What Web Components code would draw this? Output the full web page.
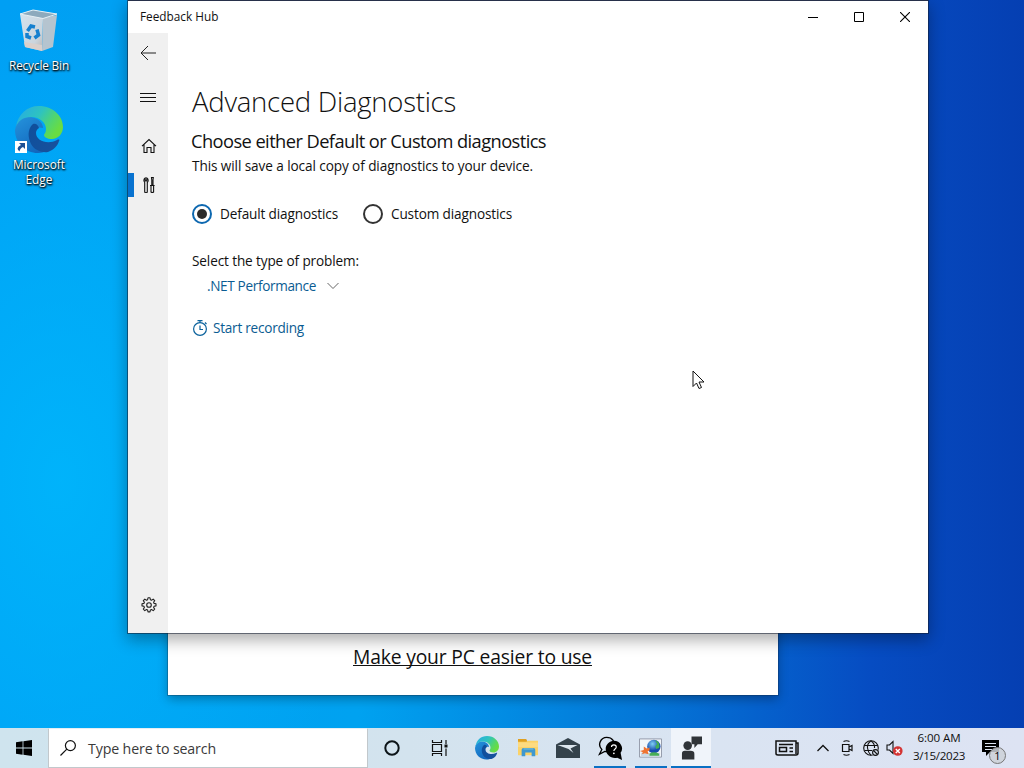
<!DOCTYPE html>
<html lang="en">
<head>
<meta charset="utf-8">
<title>Feedback Hub</title>
<style>
    html, body {
        margin: 0;
        width: 1024px;
        height: 768px;
        overflow: hidden;
        font-family: "Open Sans", "Noto Sans", sans-serif;
    }
</style>
</head>
<body>
<win-desktop></win-desktop>
<script>
(function () {
    function define(name, html, setup) {
        const template = document.createElement("template");
        template.innerHTML = html;
        customElements.define(name, class extends HTMLElement {
            constructor() {
                super();
                this.attachShadow({ mode: "open" }).appendChild(template.content.cloneNode(true));
            }
            connectedCallback() {
                if (setup) setup.call(this, this.shadowRoot);
            }
        });
    }

    // One line of text, tracked so that it spans the given width
    define("text-run", `
        <style>
            :host { display: block; white-space: nowrap; }
            span { display: inline-block; }
        </style>
        <span><slot></slot></span>
    `, function (root) {
        const span = root.querySelector("span");
        const width = Number(this.getAttribute("width"));
        if (!width) return;
        span.style.letterSpacing = "0";
        const natural = span.getBoundingClientRect().width;
        span.style.letterSpacing = (width - natural) / this.textContent.length + "px";
    });

    // ---- icons ----
    const edgeArt = id => `
        <svg viewBox="0 0 48 48">
            <defs>
                <linearGradient id="${id}a" x1="0" y1="0" x2="1" y2=".5">
                    <stop offset="0" stop-color="#25a9e8"/><stop offset=".5" stop-color="#2ec3c0"/>
                    <stop offset=".8" stop-color="#52d66c"/><stop offset="1" stop-color="#69dc42"/>
                </linearGradient>
                <linearGradient id="${id}b" x1="0" y1="0" x2=".6" y2="1">
                    <stop offset="0" stop-color="#2593dc"/><stop offset="1" stop-color="#1267bd"/>
                </linearGradient>
                <linearGradient id="${id}c" x1="0" y1="0" x2="1" y2=".3">
                    <stop offset="0" stop-color="#0f4f9c"/><stop offset="1" stop-color="#17519c"/>
                </linearGradient>
            </defs>
            <path fill="url(#${id}b)" d="M1 20C2 15 8 11 14 11c8 0 14 5 14 11-6-2-10 1-10 7 0 8 6 14 15 15-3 2-6 3-10 3C10 47 0 37 0 24z"/>
            <path fill="url(#${id}c)" d="M18 18c-6 5-5 14-2 20 3 6 11 9 17 8 6-2 10-7 11-11 1-1 0-2-2-1-9 5-21 1-21-7 0-2 1-4 3-5-1-3-3-5-6-4z"/>
            <path fill="url(#${id}a)" d="M1 21C3 8 12 0 24 0c14 0 24 10 24 21 0 7-5 12-11 12-5 0-8-2-8-4 0-1 2-2 2-6 0-6-6-12-15-12C8 11 3 15 1 21z"/>
        </svg>`;

    const icons = {
        back: `<svg viewBox="0 0 16 16" fill="none" stroke="#222"><path d="M8 1 1 8l7 7M1 8h15"/></svg>`,
        menu: `<svg viewBox="0 0 16 16" stroke="#111"><path d="M0 3.5h16M0 7.5h16M0 11.5h16"/></svg>`,
        home: `<svg viewBox="0 0 16 16" fill="none" stroke="#111" stroke-width="1.1"><path d="M1 8.2 8 1.500l7 6.700M3 6.500v8h3v-5h4v5h3v-8"/></svg>`,
        tools: `<svg viewBox="0 0 16 16" fill="none" stroke="#111" stroke-width="1.1"><path d="M4.200.9v3h1.600v-3c1.600.8 1.800 3.400.500 4.600v9a1.200 1.200 0 0 1-2.600 0v-9C2.500 4.200 2.600 1.700 4.200.9zM10.500.5h1.800l-.3 2.500v5h-1.200V3zM9 8.500h4.600M10 8.500v6.500q1.300 1.200 2.600 0V8.500"/></svg>`,
        gear: `<svg viewBox="0 0 16 16" fill="none" stroke="#222" stroke-width="1.100" stroke-linejoin="round">
            <circle cx="8" cy="8" r="2.300"/>
            <path d="M6.600 2.700 7 .8h2l.4 1.900 1.100.5 1.700-1.100 1.500 1.500-1.100 1.700.5 1.100 1.900.4v2.100l-1.900.4-.5 1.200 1.100 1.600-1.500 1.500-1.700-1.100-1.100.5-.4 1.900H7l-.4-1.900-1.100-.5-1.700 1.100-1.500-1.500 1.100-1.600-.5-1.200L1 8.900V6.800l1.900-.4.5-1.100-1.100-1.700 1.500-1.500 1.700 1.100z"/></svg>`,
        timer: `<svg viewBox="0 0 16 16" fill="none" stroke="#0b629c" stroke-width="1.200"><circle cx="8" cy="9" r="6.400"/><path d="M5.500.6h5M8 .6v2M13 2.500l1.500 1.500M8 5.500v4h3"/></svg>`,
        chevron: `<svg viewBox="0 0 12 8" fill="none" stroke="#666"><path d="m.5 1 5.500 5.500L11.500 1"/></svg>`,
        minimize: `<svg viewBox="0 0 10 10"><path d="M0 5h10v1H0z"/></svg>`,
        maximize: `<svg viewBox="0 0 10 10" fill="none" stroke="#000"><path d="M.5.5h9v9h-9z"/></svg>`,
        close: `<svg viewBox="0 0 10 10" stroke="#000" stroke-width="1.100"><path d="m0 0 10 10M10 0 0 10"/></svg>`,
        start: `<svg viewBox="0 0 16 16"><path d="M0 2.200 6.600 1.300v6.300H0zM7.400 1.200 16 0v7.600H7.400zM0 8.400h6.600v6.300L0 13.800zM7.400 8.400H16V16l-8.600-1.200z"/></svg>`,
        search: `<svg viewBox="0 0 16 16" fill="none" stroke="#111" stroke-width="1.200"><circle cx="10.400" cy="5.600" r="5"/><path d="M6.800 9.200.5 15.500"/></svg>`,
        cortana: `<svg viewBox="0 0 16 16" fill="none" stroke="#0c1418" stroke-width="2"><circle cx="8" cy="8" r="6.700"/></svg>`,
        taskview: `<svg viewBox="0 0 18 16" fill="none" stroke="#111" stroke-width="1.200"><path d="M1.500 4.500h9v7h-9zM1.500 0v2.500h9V0M1.500 16v-2.500h9V16M15 0v4M15 8.500V16"/><path d="M13.500 4.500h3v3h-3z" fill="#111" stroke="none"/></svg>`,
        edge: edgeArt("t"),
        desktopEdge: edgeArt("d"),
        explorer: `<svg viewBox="0 0 24 22"><path fill="#e0a020" d="M1 1h9l1 2v4H1z"/><path fill="#fbd267" d="M1 4h9l2-1h11v16H1z"/><path fill="#fddb80" d="M1 5h22v5H1z"/><path fill="#3e98cf" d="M5 20v-7q0-2 2-2h11q2 0 2 2v7h-4v-4H9v4z"/><path fill="#62b0d4" d="M7 11h11v2H7z"/></svg>`,
        mail: `<svg viewBox="0 0 24 20"><path fill="#34424b" d="M0 6.500 12 0l12 6.500V20H0z"/><path fill="#dce6ee" d="M1.500 7h20l-7 3.500 3 4.500-5-4z"/></svg>`,
        help: `<svg viewBox="0 0 26 26"><path d="M1.500 19 4 14C-1 9 3 1.500 9 1.500S18 6 16 11 9 16.500 7 16z" fill="none" stroke="#000" stroke-width="1.400"/><path d="M16.500 5a8.500 8 0 0 1 7 12.500L25 25l-5-2.500C14 24 8 19.500 8 13.500 8 9 12 5 16.500 5z"/><path d="M14 11.500c0-3 5-3 5 0 0 2-2.500 2-2.500 4" fill="none" stroke="#fff" stroke-width="1.200"/><circle cx="16.500" cy="18" r=".9" fill="#fff"/></svg>`,
        picture: `<svg viewBox="0 0 24 20"><defs><radialGradient id="g" cx=".4" cy=".3"><stop offset="0" stop-color="#7fd0f2"/><stop offset="1" stop-color="#174bb0"/></radialGradient></defs><path fill="#f2f6fa" stroke="#929aa8" d="M.5.5h23v19H.5z"/><path fill="#cbd9e5" d="M2 15h20v4H2z"/><circle cx="15.500" cy="8.500" r="7" fill="url(#g)"/><path d="M17 2c4 1 5 5 4 8l-3 1-1-3 2-2z" fill="#42ae56"/><path d="M11 16q4-3 10 0v2H11z" fill="#48ae57"/><path d="m1 13 4-1V8.500l3 2 3-1v3l-2 1 1 3-4-1-3 1 1-2z" fill="#ef7330"/></svg>`,
        hub: `<svg viewBox="0 0 22 24" fill="#303438"><circle cx="7" cy="9.500" r="4.500"/><path d="M1 24v-6q0-3 3-3h6q4 0 4 3v6zM11 0h11v8h-4.500L14 12V8h-3z"/></svg>`,
        news: `<svg viewBox="0 0 24 16" fill="none" stroke="#111" stroke-width="1.500"><path d="M21 3V1H1v12.500Q1 15 3 15h18q2 0 2-2V3h-2v11M4 4.500h14M14.500 8H18M14.500 11.500H18"/><path d="M4.500 7.500h7v4h-7z"/></svg>`,
        up: `<svg viewBox="0 0 12 8" fill="none" stroke="#111" stroke-width="1.300"><path d="m.5 7 5.500-5.500L11.500 7"/></svg>`,
        meet: `<svg viewBox="0 0 12 16" fill="none" stroke="#111" stroke-width="1.200"><path d="M2 1.500q3-1.500 6 0M2 14.500q3 1.500 6 0M1 4.500h6.500v7H1zM7.500 7l3-1.500v5l-3-1.500"/></svg>`,
        globe: `<svg viewBox="0 0 17 17" fill="none" stroke="#111" stroke-width="1.100"><circle cx="8" cy="8" r="7.300"/><path d="M1.500 5.500h13M1.500 10.500H9M8 .7q-4 3-3.500 7.300T8 15.300M8 .7q4 3 3.500 7.300"/><circle cx="12.500" cy="12.500" r="3.700" fill="#dde5f2" stroke="none"/><circle cx="12.500" cy="12.500" r="2.900"/><path d="m10.500 10.500 4 4"/></svg>`,
        sound: `<svg viewBox="0 0 17 16" fill="none" stroke="#111" stroke-width="1.100"><path d="M1 5h2.500L7 1.500v12L3.500 10H1z"/><circle cx="11.800" cy="11" r="4.800" fill="#d43434" stroke="none"/><path d="m9.800 9 4 4m0-4-4 4" stroke="#fff" stroke-width="1.400"/></svg>`,
        note: `<svg viewBox="0 0 17 16"><path d="M0 0h17v12H8l-4 4v-4H0z"/><path d="M3 3.500h11M3 6.500h11M3 9.500h7" stroke="#dde5f2" stroke-width="1.100"/></svg>`,
        cursor: `<svg viewBox="0 0 13 20"><path d="M1 1v15.500L4.500 13l2.500 5.500 2.500-1L7 12h5z" fill="#fff" stroke="#111"/></svg>`,
        bin: `<svg viewBox="0 0 40 44"><defs><linearGradient id="n" x2="1" y2="1"><stop stop-color="#d3e3ee"/><stop offset=".7" stop-color="#cbd5dd"/><stop offset="1" stop-color="#b9b4b3"/></linearGradient></defs>
            <path fill="url(#n)" d="M1 5 24 9l-1 33L6 38z"/><path fill="#b5c4cf" d="M24 9 38 6l-4 32-11 4z"/><path fill="#8daabd" stroke="#e8f0f4" d="M1 5 14 1l24 4-14 4.500z"/><path fill="#d9d0cc" d="m5 33 18 3v6L6 38z"/>
            <g fill="none" stroke="#1580cf" stroke-width="3.500"><path d="m8.500 22 3.500-5 4 1M18 20.500l1.500 5.500-4 3M12 29l-4-1.500V24"/></g></svg>`,
        shortcut: `<svg viewBox="0 0 12 12"><path fill="#fff" d="M0 0h12v12H0z"/><path fill="#1c4f94" d="M4 2h6v6L8 6Q5 7 4.500 10.500 0 7 6 4z"/></svg>`
    };

    define("ui-icon", `
        <style>
            :host { display: block; flex: none; }
            div, svg { display: block; width: 100%; height: 100%; }
        </style>
        <div></div>
    `, function (root) {
        root.querySelector("div").innerHTML = icons[this.getAttribute("name")];
        this.style.width = this.getAttribute("w") + "px";
        this.style.height = (this.getAttribute("h") || this.getAttribute("w")) + "px";
    });

    // ---- desktop shortcuts ----
    define("desktop-icon", `
        <style>
            :host {
                display: flex;
                flex-direction: column;
                align-items: center;
                width: 78px;
                color: #fff;
                font-size: 11.8px;
                line-height: 15px;
                text-shadow: 0 1px 2px #000, 1px 1px 2px #000;
            }
            .art { position: relative; }
            ::slotted([slot=badge]) { position: absolute; left: 0; bottom: 0; }
        </style>
        <div class="art"><slot name="art"></slot><slot name="badge"></slot></div>
        <slot></slot>
    `);

    // ---- Feedback Hub window ----
    define("title-bar", `
        <style>
            :host { display: flex; align-items: center; height: 32px; font-size: 11.8px; color: #111; }
            text-run { margin-left: 12px; margin-bottom: 2px; flex: 1; }
            .button { width: 46px; display: flex; justify-content: center; }
        </style>
        <text-run width="76"><slot></slot></text-run>
        <div class="button"><ui-icon name="minimize" w="10"></ui-icon></div>
        <div class="button"><ui-icon name="maximize" w="10"></ui-icon></div>
        <div class="button"><ui-icon name="close" w="10"></ui-icon></div>
    `);
    // the title is slotted, so its own text has no length for text-run to divide by

    define("nav-rail", `
        <style>
            :host { display: flex; flex-direction: column; width: 40px; background: #f0f0f0; }
            div { display: flex; align-items: center; height: 40px; padding-left: 13px; box-sizing: border-box; }
            .top { padding-left: 12px; }
            .menu { height: 49px; }
            .home { height: 47px; }
            .current { height: 24px; margin-top: 4px; border-left: 6px solid #0873d0; padding-left: 7px; }
            .settings { margin-top: auto; height: 56px; }
        </style>
        <div class="top"><ui-icon name="back" w="16"></ui-icon></div>
        <div class="top menu"><ui-icon name="menu" w="16"></ui-icon></div>
        <div class="home"><ui-icon name="home" w="16"></ui-icon></div>
        <div class="current"><ui-icon name="tools" w="16"></ui-icon></div>
        <div class="settings"><ui-icon name="gear" w="16"></ui-icon></div>
    `);

    define("radio-option", `
        <style>
            :host { display: flex; align-items: center; gap: 8px; height: 20px; }
            i {
                width: 20px;
                height: 20px;
                box-sizing: border-box;
                border: 2px solid #333;
                border-radius: 50%;
                display: flex;
                align-items: center;
                justify-content: center;
            }
            :host([checked]) i { border-color: #0d68b0; }
            :host([checked]) i::after {
                content: "";
                width: 10px;
                height: 10px;
                border-radius: 50%;
                background: #2b2b2b;
            }
        </style>
        <i></i><slot></slot>
    `);

    define("diagnostics-page", `
        <style>
            :host {
                display: block;
                flex: 1;
                padding: 51px 24px 0;
                font-size: 13.6px;
                line-height: 20px;
                color: #111;
            }
            .heading { font-size: 27.5px; line-height: 36px; font-weight: 340; }
            .sub { font-size: 18.3px; line-height: 26px; font-weight: 370; margin: 8px 0 2px -1px; }
            .row { display: flex; align-items: center; }
            .radios { gap: 25px; margin: 28px 0 27px; }
            .link { color: #0b5c92; }
            .select { margin: 5px 0 22px 15px; gap: 11px; }
            .record { gap: 5px; }
        </style>
        <text-run class="heading" width="264">Advanced Diagnostics</text-run>
        <text-run class="sub" width="355">Choose either Default or Custom diagnostics</text-run>
        <text-run width="341">This will save a local copy of diagnostics to your device.</text-run>
        <div class="row radios">
            <radio-option checked><text-run width="118">Default diagnostics</text-run></radio-option>
            <radio-option><text-run width="121">Custom diagnostics</text-run></radio-option>
        </div>
        <text-run width="167">Select the type of problem:</text-run>
        <div class="row link select"><text-run width="109">.NET Performance</text-run><ui-icon name="chevron" w="12" h="8"></ui-icon></div>
        <div class="row link record"><ui-icon name="timer" w="16"></ui-icon><text-run width="91">Start recording</text-run></div>
    `);

    define("hub-window", `
        <style>
            :host {
                display: flex;
                flex-direction: column;
                box-sizing: border-box;
                background: #fff;
                border-top: 1px solid #27304a;
                box-shadow: 0 0 0 1px rgba(20,30,50,.55), 0 6px 15px 1px rgba(0,0,0,.32);
            }
            .body { display: flex; flex: 1; }
        </style>
        <title-bar>Feedback Hub</title-bar>
        <div class="body"><nav-rail></nav-rail><diagnostics-page></diagnostics-page></div>
    `);

    define("tips-window", `
        <style>
            :host {
                display: flex;
                flex-direction: column;
                justify-content: flex-end;
                align-items: center;
                box-sizing: border-box;
                padding: 0 1px 29px 0;
                background: #fff;
                box-shadow: 0 0 0 1px rgba(20,40,60,.3), 0 4px 10px rgba(0,0,0,.3);
                font-size: 19.3px;
                line-height: 19px;
                color: #111;
            }
            text-run { border-bottom: 1px solid #111; height: 18px; }
        </style>
        <text-run width="239">Make your PC easier to use</text-run>
    `);

    // ---- taskbar ----
    define("task-button", `
        <style>
            :host {
                display: flex;
                align-items: center;
                justify-content: center;
                width: 41px;
                height: 40px;
                box-sizing: border-box;
                background: linear-gradient(#0a70c4, #0a70c4) center bottom / 0 2px no-repeat;
            }
            :host([running]) { background-size: 32px 2px; }
            :host([active]) { width: 40px; background-size: 40px 2px; background-color: #f0f4fa; }
        </style>
        <slot></slot>
    `);

    define("task-bar", `
        <style>
            :host {
                display: flex;
                align-items: center;
                height: 40px;
                background: linear-gradient(90deg, #cfe4ee, #d3e3ee 40%, #dae4f2 70%, #dde3f3);
            }
            .start { width: 48px; display: flex; justify-content: center; }
            .search {
                box-sizing: border-box;
                display: flex;
                align-items: center;
                gap: 12px;
                width: 320px;
                height: 40px;
                padding: 0 0 0 11px;
                border: 1px solid #c2c8cc;
                border-top-color: #e4eef4;
                background: #fff;
                color: #3a3a3a;
                font-size: 14.2px;
            }
            .search text-run { margin-top: 1px; }
            .wide { width: 48px; }
            .files { width: 36px; }
            .mail { width: 44px; }
            .browser { width: 46px; }
            .running { width: 40px; }
            .tray { display: flex; align-items: center; margin-left: auto; }
            .tray ui-icon { margin-right: var(--gap, 9px); }
            .clock {
                width: 52px;
                display: flex;
                flex-direction: column;
                align-items: center;
                font-size: 11.6px;
                line-height: 18px;
                color: #111;
                margin: 0 17px 0 10px;
                padding-bottom: 2px;
            }
            .note { position: relative; width: 42px; height: 16px; }
            .count {
                position: absolute;
                left: 7px;
                top: 7px;
                width: 15px;
                height: 15px;
                border: 1px solid #777;
                border-radius: 50%;
                background: rgba(205,209,215,.85);
                font-size: 11px;
                line-height: 15px;
                text-align: center;
            }
        </style>
        <div class="start"><ui-icon name="start" w="16"></ui-icon></div>
        <div class="search"><ui-icon name="search" w="16"></ui-icon><text-run width="128">Type here to search</text-run></div>
        <task-button class="wide"><ui-icon name="cortana" w="16"></ui-icon></task-button>
        <task-button class="wide"><ui-icon name="taskview" w="18" h="16"></ui-icon></task-button>
        <task-button class="browser"><ui-icon name="edge" w="24"></ui-icon></task-button>
        <task-button class="files"><ui-icon name="explorer" w="22" h="20"></ui-icon></task-button>
        <task-button class="mail"><ui-icon name="mail" w="24" h="20"></ui-icon></task-button>
        <task-button class="running" running><ui-icon name="help" w="25"></ui-icon></task-button>
        <task-button running><ui-icon name="picture" w="23" h="20"></ui-icon></task-button>
        <task-button running active><ui-icon name="hub" w="21" h="24"></ui-icon></task-button>
        <div class="tray">
            <ui-icon name="news" w="24" h="16" style="--gap:18px"></ui-icon>
            <ui-icon name="up" w="12" h="8" style="--gap:12px"></ui-icon>
            <ui-icon name="meet" w="13" h="16"></ui-icon>
            <ui-icon name="globe" w="17" style="--gap:6px"></ui-icon>
            <ui-icon name="sound" w="17" h="16" style="--gap:0px"></ui-icon>
            <div class="clock"><text-run width="43">6:00 AM</text-run><text-run width="52">3/15/2023</text-run></div>
            <div class="note"><ui-icon name="note" w="17" h="16"></ui-icon><div class="count">1</div></div>
        </div>
    `);

    // Windows and shortcuts sit freely on the desktop, the taskbar closes it below
    define("win-desktop", `
        <style>
            :host {
                display: flex;
                flex-direction: column;
                width: 1024px;
                height: 768px;
                overflow: hidden;
            }
            main {
                position: relative;
                flex: 1;
                background:
                    radial-gradient(ellipse 300px 480px at 60px 480px, rgba(0,184,252,.8), rgba(0,176,250,0)),
                    linear-gradient(90deg, #009ff4 0, #00a2f0 35%, #0478d8 62%, #064cc2 85%, #053fb2 100%);
            }
            main > * { position: absolute; }
            .bin { left: 0; top: 9px; }
            .edge { left: 0; top: 106px; }
            .tips { left: 168px; top: 400px; width: 610px; height: 295px; }
            .hub { left: 128px; top: 0; width: 800px; height: 633px; }
            .cursor { left: 692px; top: 370px; }
        </style>
        <main>
            <desktop-icon class="bin"><ui-icon slot="art" name="bin" w="40" h="44" style="margin-bottom:5px"></ui-icon><text-run width="60">Recycle Bin</text-run></desktop-icon>
            <desktop-icon class="edge"><ui-icon slot="art" name="desktopEdge" w="48" style="margin-bottom:3px"></ui-icon><ui-icon slot="badge" name="shortcut" w="12" style="margin-bottom:4px"></ui-icon><text-run width="52">Microsoft</text-run><text-run width="27">Edge</text-run></desktop-icon>
            <tips-window class="tips"></tips-window>
            <hub-window class="hub"></hub-window>
            <ui-icon class="cursor" name="cursor" w="13" h="20"></ui-icon>
        </main>
        <task-bar></task-bar>
    `);
})();
</script>
</body>
</html>
